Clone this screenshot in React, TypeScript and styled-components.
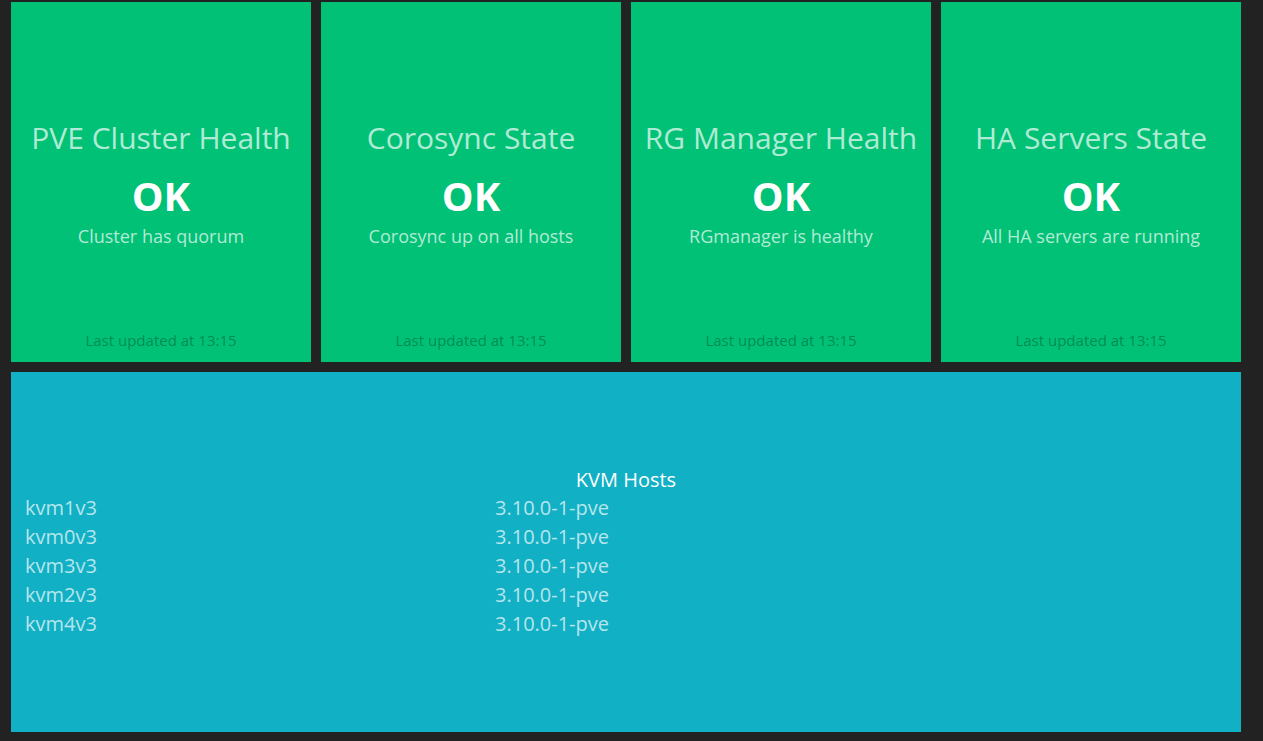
import React from "react";
import styled, { createGlobalStyle } from "styled-components";

const Global = createGlobalStyle`
  html, body { margin: 0; padding: 0; background: #222222; }
  body { font-family: "Open Sans", "Noto Sans", sans-serif; }
  * { box-sizing: border-box; }
`;

const Board = styled.div`
  width: 1263px;
  height: 741px;
  padding: 2px 0 0 11px;
  display: grid;
  grid-template-columns: repeat(4, 300px);
  grid-auto-rows: 360px;
  gap: 10px;
`;

const StatusTile = styled.div`
  background: #00c176;
  display: flex;
  flex-direction: column;
  align-items: center;
  padding: 0 0 12px;
  color: #fff;
  text-align: center;
`;

const StatusBody = styled.div`
  flex: 1;
  display: flex;
  flex-direction: column;
  align-items: center;
  justify-content: center;
  padding-top: 36px;
`;

const Title = styled.h1`
  margin: 0 0 12px;
  font-size: 30px;
  font-weight: 400;
  line-height: 36px;
  color: rgba(255, 255, 255, 0.7);
  white-space: nowrap;
`;

const Status = styled.h2`
  margin: 0;
  font-size: 40px;
  font-weight: 700;
  line-height: 56px;
  color: #fff;
`;

const Info = styled.p`
  margin: 0;
  font-size: 18px;
  line-height: 24px;
  color: rgba(255, 255, 255, 0.7);
`;

const Updated = styled.p`
  margin: 0;
  font-size: 15px;
  line-height: 20px;
  color: rgba(0, 0, 0, 0.3);
`;

const ListTile = styled.div`
  grid-column: 1 / -1;
  background: #12b0c5;
  display: flex;
  flex-direction: column;
  justify-content: center;
  padding: 0 14px;
`;

const ListTitle = styled.h3`
  margin: 0;
  font-size: 20px;
  font-weight: 400;
  line-height: 27px;
  text-align: center;
  color: #fff;
`;

const HostRow = styled.div`
  display: grid;
  grid-template-columns: 470px 1fr;
  font-size: 20px;
  line-height: 29px;
  color: rgba(255, 255, 255, 0.7);
`;

const checks = [
  { title: "PVE Cluster Health", info: "Cluster has quorum" },
  { title: "Corosync State", info: "Corosync up on all hosts" },
  { title: "RG Manager Health", info: "RGmanager is healthy" },
  { title: "HA Servers State", info: "All HA servers are running" },
];

const hosts = ["kvm1v3", "kvm0v3", "kvm3v3", "kvm2v3", "kvm4v3"];

export default function App() {
  return (
    <>
      <Global />
      <Board>
        {checks.map((c) => (
          <StatusTile key={c.title}>
            <StatusBody>
              <Title>{c.title}</Title>
              <Status>OK</Status>
              <Info>{c.info}</Info>
            </StatusBody>
            <Updated>Last updated at 13:15</Updated>
          </StatusTile>
        ))}
        <ListTile>
          <ListTitle>KVM Hosts</ListTitle>
          {hosts.map((h) => (
            <HostRow key={h}>
              <span>{h}</span>
              <span>3.10.0-1-pve</span>
            </HostRow>
          ))}
        </ListTile>
      </Board>
    </>
  );
}
